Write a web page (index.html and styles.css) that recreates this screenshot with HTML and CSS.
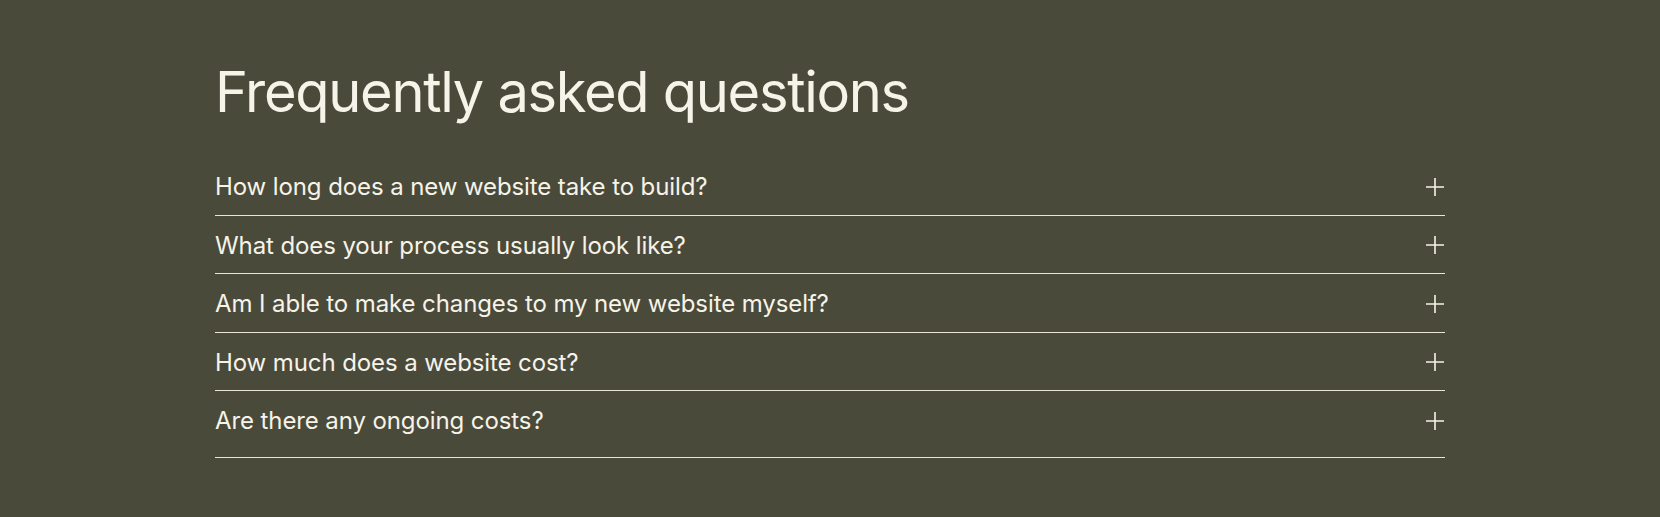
FILE: index.html
```html
<!DOCTYPE html>
<html lang="en">
<head>
    <meta charset="UTF-8">
    <meta name="viewport" content="width=device-width, initial-scale=1.0">
    <title>FAQ</title>
    <link rel="stylesheet" href="styles.css">
</head>
<body>
<section class="faq">
    <h1 class="faq-title">Frequently asked questions</h1>

    <div class="faq-list">
        <div class="faq-item">
            <span class="faq-question">How long does a new website take to build?</span>
            <svg class="faq-plus" viewBox="0 0 20 20"><path d="M10 1v18M1 10h18"/></svg>
        </div>
        <div class="faq-item">
            <span class="faq-question">What does your process usually look like?</span>
            <svg class="faq-plus" viewBox="0 0 20 20"><path d="M10 1v18M1 10h18"/></svg>
        </div>
        <div class="faq-item">
            <span class="faq-question">Am I able to make changes to my new website myself?</span>
            <svg class="faq-plus" viewBox="0 0 20 20"><path d="M10 1v18M1 10h18"/></svg>
        </div>
        <div class="faq-item">
            <span class="faq-question">How much does a website cost?</span>
            <svg class="faq-plus" viewBox="0 0 20 20"><path d="M10 1v18M1 10h18"/></svg>
        </div>
        <div class="faq-item">
            <span class="faq-question">Are there any ongoing costs?</span>
            <svg class="faq-plus" viewBox="0 0 20 20"><path d="M10 1v18M1 10h18"/></svg>
        </div>
    </div>
</section>
</body>
</html>
```

FILE: styles.css
```css
/* 页面底色：深橄榄绿 */
body {
    margin: 0;
    background-color: #4a4a3b;
    color: #f6f3e9;
    font-family: Inter, "Liberation Sans", sans-serif;
}

/* 内容区居中，宽度固定 */
.faq {
    width: 1230px;
    margin: 0 auto;
    padding: 64px 0 60px;
}

.faq-title {
    margin: 0 0 37px;
    font-size: 56px;
    line-height: 1;
    font-weight: 400;
    letter-spacing: -1.3px;
}

/* 每个问题一行，下面有一条细线 */
.faq-item {
    display: flex;
    align-items: center;
    justify-content: space-between;
    padding: 17px 0 14.5px;
    border-bottom: 1px solid #e9e6d8;
}

/* 最后一行底部留多一点 */
.faq-item:last-child {
    padding-bottom: 23px;
}

.faq-question {
    font-size: 24px;
    line-height: 26px;
    letter-spacing: -0.1px;
}

.faq-plus {
    width: 20px;
    height: 20px;
    margin-top: -1px;
    fill: none;
    stroke: #f6f3e9;
    stroke-width: 1.6;
}
```
